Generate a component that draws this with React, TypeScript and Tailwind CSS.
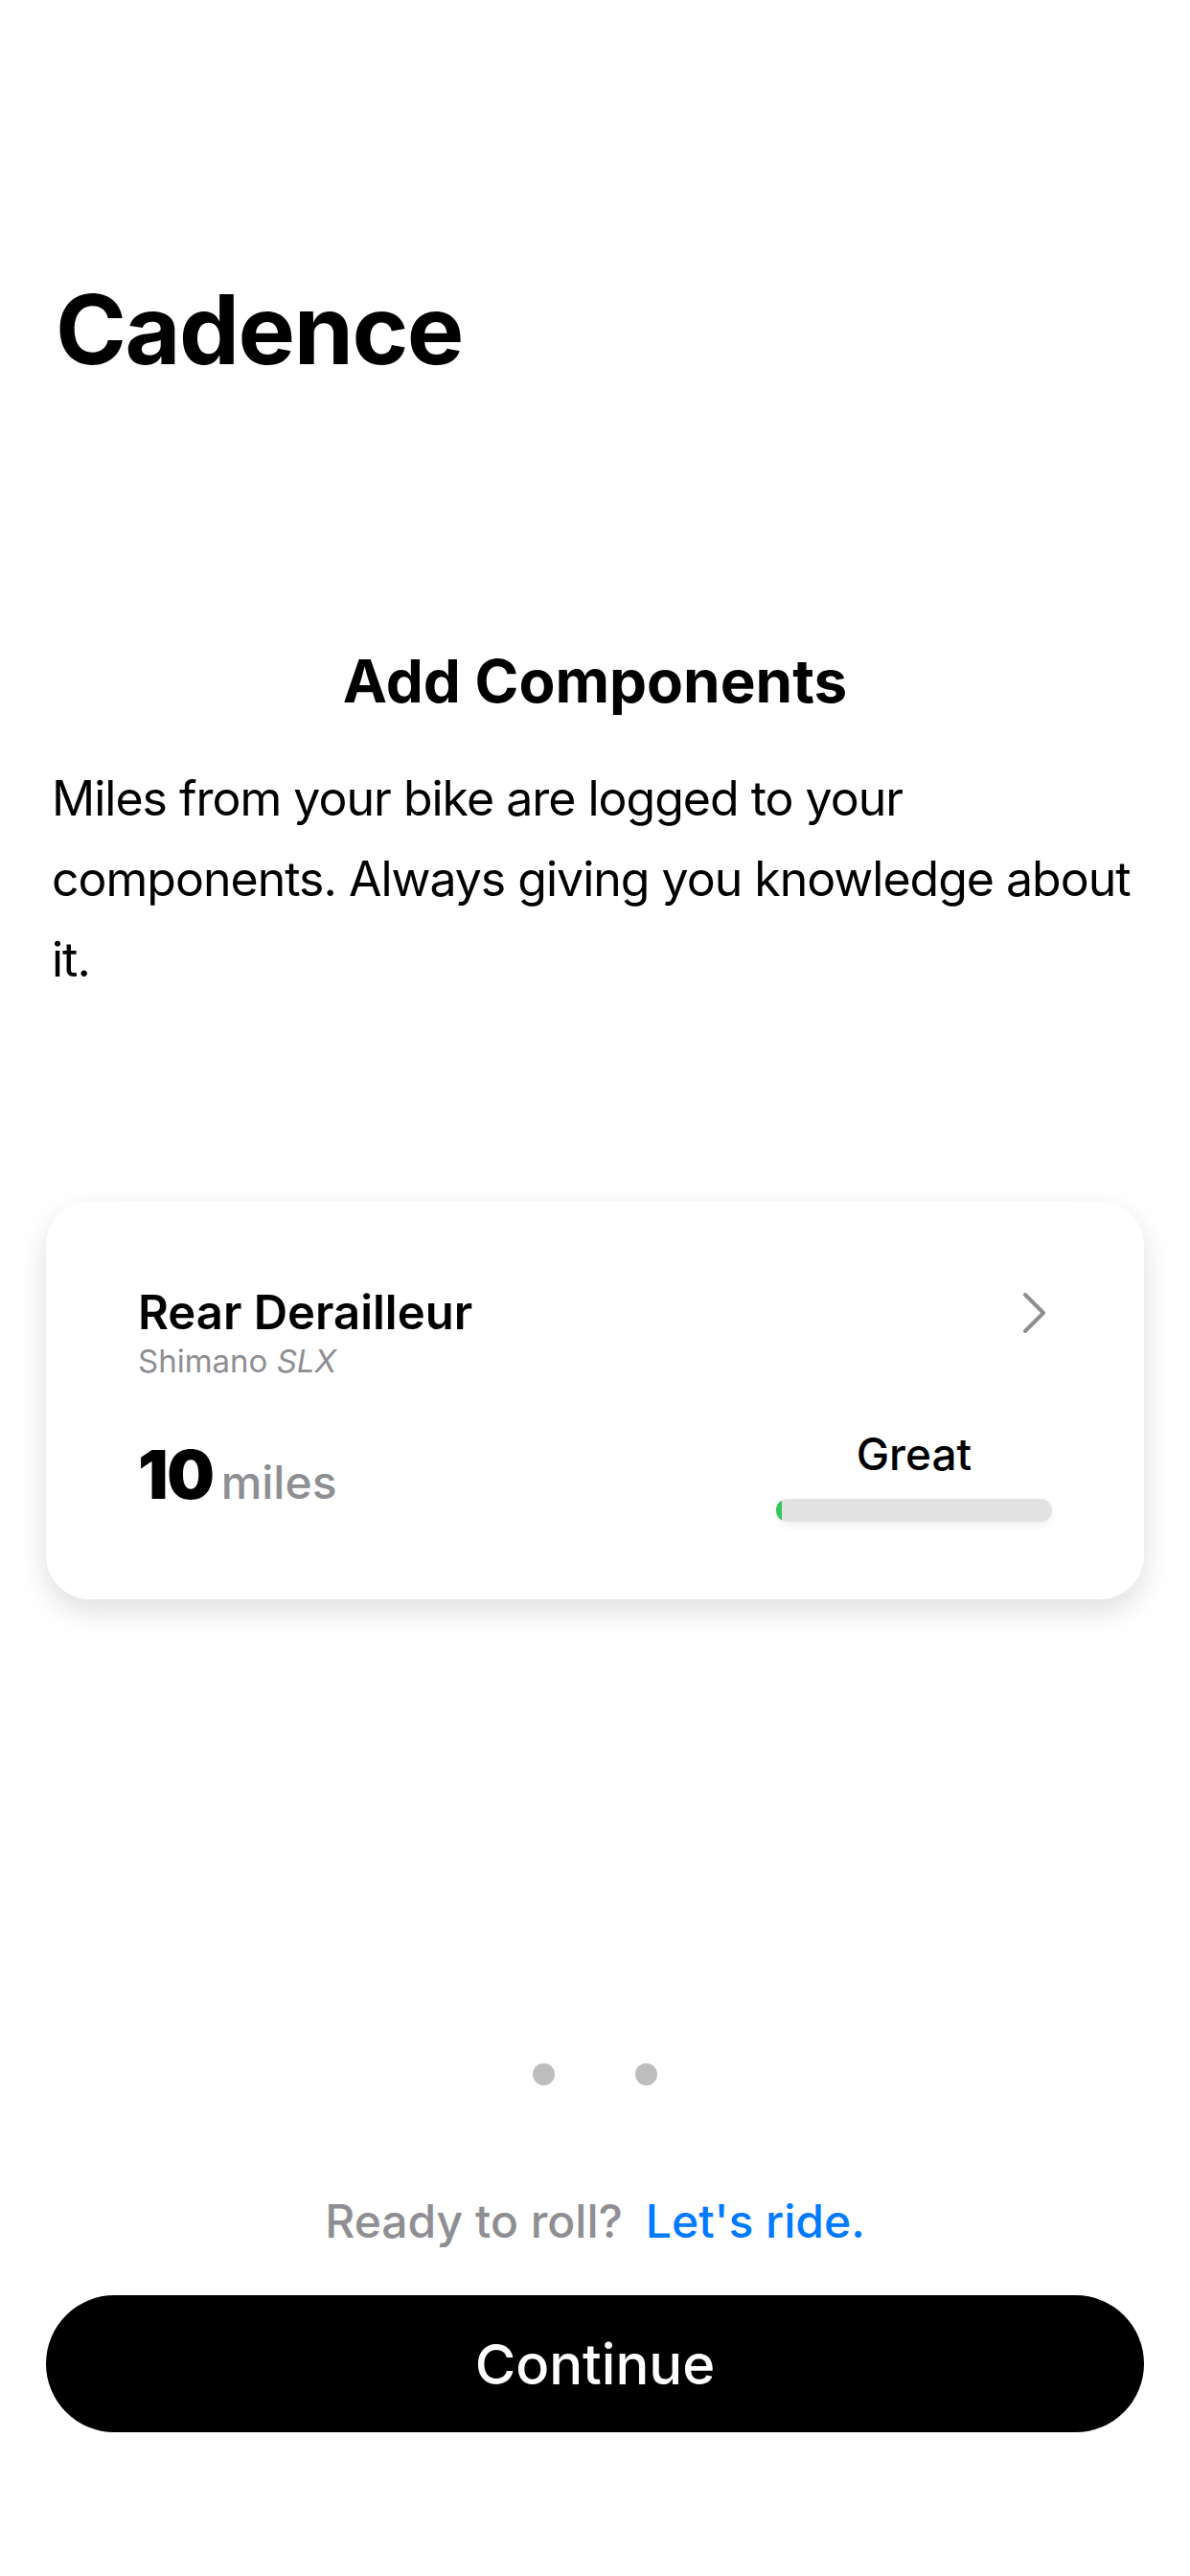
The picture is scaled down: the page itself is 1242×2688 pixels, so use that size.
// Onboarding page: "Add Components"
const component = {
  name: "Rear Derailleur",
  brand: "Shimano",
  model: "SLX",
  miles: 10,
  status: "Great",
  wear: 2, // percent used
}

function ComponentCard() {
  return (
    <div className="mx-[48px] rounded-[46px] bg-white pt-[91px] pb-[81px] pl-[96px] pr-[96px] shadow-[0_12px_30px_rgba(0,0,0,0.13)]">
      <div className="flex items-start justify-between">
        <div className="flex flex-col">
          <span className="text-[49px] font-semibold leading-none text-black">{component.name}</span>
          <span className="mt-[10px] text-[33px] leading-none text-[#8e8e93]">
            {component.brand} <i>{component.model}</i>
          </span>
        </div>
        <svg className="mt-[3px] mr-[5px] h-[44px] w-[26px]" viewBox="0 0 26 44" fill="none">
          <path d="M3 3 L22 22 L3 41" stroke="#8e8e93" strokeWidth="4" strokeLinecap="round" strokeLinejoin="round" />
        </svg>
      </div>

      <div className="mt-[57px] flex items-start justify-between">
        <div className="mt-[10px] flex items-baseline">
          <span className="text-[70px] font-black leading-none tracking-[-0.02em] text-black">{component.miles}</span>
          <span className="ml-[8px] text-[48px] font-medium leading-none text-[#8e8e93]">miles</span>
        </div>
        <div className="flex w-[288px] flex-col items-center">
          <span className="text-[46px] font-medium leading-none text-black">{component.status}</span>
          <div className="mt-[24px] h-[24px] w-full overflow-hidden rounded-full bg-[#e2e2e2] shadow-[0_4px_8px_rgba(0,0,0,0.06)]">
            <div className="h-full rounded-full bg-[#34c759]" style={{ width: `${component.wear}%` }} />
          </div>
        </div>
      </div>
    </div>
  )
}

export default function App() {
  return (
    <div
      className="flex h-[2688px] w-[1242px] flex-col bg-white"
      style={{ fontFamily: "Inter, 'Noto Sans', sans-serif" }}
    >
      <h1 className="mt-[294px] pl-[58px] text-[100px] font-bold leading-none tracking-[-0.015em] text-black">
        Cadence
      </h1>

      <h2 className="mt-[286px] text-center text-[62px] font-bold leading-none text-black">Add Components</h2>

      <p className="mt-[49px] pl-[54px] pr-[38px] text-[50px] leading-[84px] tracking-[-0.02em] text-black">
        Miles from your bike are logged to your components. Always giving you knowledge about it.
      </p>

      <div className="mt-[211px]">
        <ComponentCard />
      </div>

      <div className="mt-[484px] flex justify-center gap-[84px]">
        <span className="h-[23px] w-[23px] rounded-full bg-[#bdbdbd]" />
        <span className="h-[23px] w-[23px] rounded-full bg-[#bdbdbd]" />
      </div>

      <p className="mt-[118px] text-center text-[48px] font-medium leading-none">
        <span className="text-[#8e8e93]">Ready to roll?</span>
        <span className="ml-[24px] text-[#007aff]">Let's ride.</span>
      </p>

      <button className="mx-[48px] mt-[53px] flex h-[143px] items-center justify-center rounded-full bg-black text-[58px] font-medium leading-none text-white">
        Continue
      </button>
    </div>
  )
}
